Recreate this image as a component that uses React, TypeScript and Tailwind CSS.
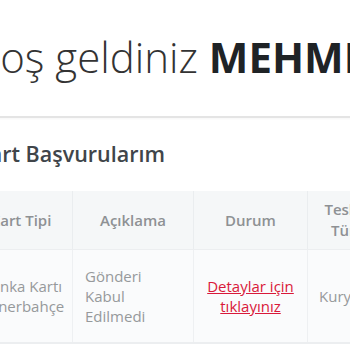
import React from "react";

const App = () => {
  return (
    <div className="w-[350px] h-[350px] overflow-hidden bg-white font-['Open_Sans',sans-serif]">
      <div className="ml-[-30px] w-[460px]">
        {/* Welcome */}
        <div className="pt-[32px] pb-[34px] border-b-2 border-[#e4e4e4] shadow-[0_1px_2px_rgba(0,0,0,0.04)]">
          <h1 className="text-[42px] leading-[50px] font-light text-[#333] whitespace-nowrap">
            Hoş geldiniz <span className="font-bold text-[#1f2326]">MEHMET YILMAZ</span>
          </h1>
        </div>

        {/* Applications */}
        <div className="pt-[21px]">
          <h2 className="text-[21.5px] leading-[30px] font-semibold text-[#40454a] ml-[6px]">
            Kart Başvurularım
          </h2>

          <div className="mt-[22px] border-b-2 border-[#eceef0] text-[15px]">
            <div className="grid grid-cols-[103px_121px_114px_80px] bg-[#f5f7f8] h-[58px] font-semibold text-[#8e9194] text-center leading-[21px]">
              <div className="flex items-center justify-center border-r border-[#eaedef] px-3">Kart Tipi</div>
              <div className="flex items-center justify-center border-r border-[#eaedef] px-3">Açıklama</div>
              <div className="flex items-center justify-center border-r border-[#eaedef] px-3">Durum</div>
              <div className="flex items-center justify-center px-3">Teslim Türü</div>
            </div>
            <div className="grid grid-cols-[103px_121px_114px_80px] bg-[#fafbfc] h-[93px] border-t border-[#eceef0] text-[#96999b] leading-[20px]">
              <div className="flex items-center border-r border-[#eef0f2] pl-3 pr-2">Banka Kartı Fenerbahçe</div>
              <div className="flex items-center border-r border-[#eef0f2] px-3">Gönderi Kabul Edilmedi</div>
              <div className="flex items-center justify-center text-center border-r border-[#eef0f2] px-3">
                <a href="#" className="text-[#d9193a] underline">Detaylar için tıklayınız</a>
              </div>
              <div className="flex items-center px-[11px]">Kurye</div>
            </div>
          </div>
        </div>
      </div>
    </div>
  );
};

export default App;
